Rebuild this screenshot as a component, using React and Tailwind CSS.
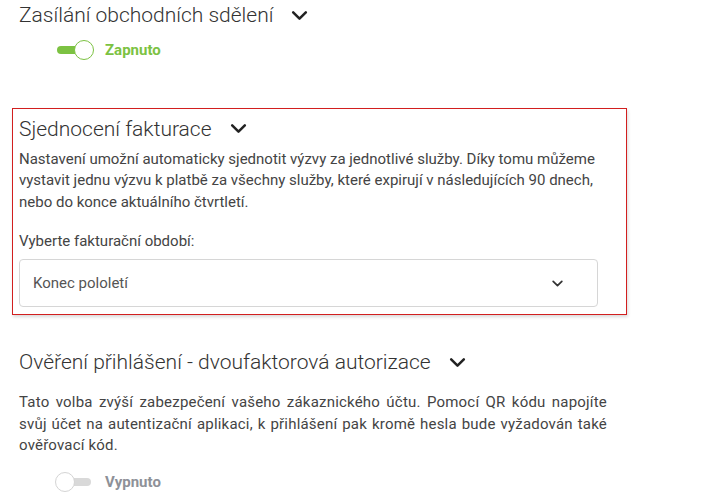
import React, { useState } from "react";

const Chevron = ({ className }) => (
    <svg viewBox="0 0 24 24" className={className} fill="none" stroke="currentColor" strokeWidth="3.2" strokeLinecap="round" strokeLinejoin="round">
        <path d="M4 8l8 8 8-8" />
    </svg>
);

const Toggle = ({ on, label, onClick }) => (
    <div className="flex items-center gap-3 pl-[36px] cursor-pointer" onClick={onClick}>
        <div className="relative w-[38px] h-[20px] flex items-center">
            <div className={`w-[34px] h-[8px] rounded-full ml-[2px] ${on ? "bg-[#7cc242]" : "bg-[#d9d9d9]"}`}></div>
            <div className={`absolute top-0 w-[20px] h-[20px] rounded-full bg-white border ${on ? "left-[19px] border-[#7cc242]" : "left-[0px] border-[#d4d4d4]"}`}></div>
        </div>
        <span className={`font-bold text-[15px] ${on ? "text-[#7cc242]" : "text-[#8e9198]"}`}>{label}</span>
    </div>
);

const Heading = ({ children }) => (
    <h2 className="flex items-center gap-[17px] text-[21px] font-light text-[#333] leading-[28px]">
        {children}
        <Chevron className="w-[19px] h-[19px] text-[#222]" />
    </h2>
);

const App = () => {
    const [marketing, setMarketing] = useState(true);
    const [twoFactor, setTwoFactor] = useState(false);
    const [period, setPeriod] = useState("Konec pololetí");

    return (
        <div className="w-[704px] h-[501px] bg-white overflow-hidden font-['Roboto',sans-serif] text-[#333]">
            <div className="pl-[19px] pt-[1px]">
                <Heading>Zasílání obchodních sdělení</Heading>
                <div className="mt-[10px]">
                    <Toggle on={marketing} label={marketing ? "Zapnuto" : "Vypnuto"} onClick={() => setMarketing(!marketing)} />
                </div>
            </div>

            <div className="mt-[46px] ml-[12px] w-[615px] border border-[#d21f1f] shadow-[1px_2px_3px_rgba(0,0,0,0.15)] px-[6px] pt-[6px] pb-[7px]">
                <Heading>Sjednocení fakturace</Heading>
                <p className="mt-[6px] text-[15px] leading-[21.5px] text-[#444] w-[590px]">
                    Nastavení umožní automaticky sjednotit výzvy za jednotlivé služby. Díky tomu můžeme vystavit jednu výzvu k platbě za všechny služby, které expirují v následujících 90 dnech, nebo do konce aktuálního čtvrtletí.
                </p>
                <p className="mt-[18px] text-[15px] leading-[21px] text-[#444]">Vyberte fakturační období:</p>
                <div className="relative mt-[7px] w-[579px]">
                    <select
                        value={period}
                        onChange={(e) => setPeriod(e.target.value)}
                        className="appearance-none w-full h-[48px] border border-[#d6d6d6] rounded-[4px] bg-white pl-[13px] text-[15px] text-[#555] outline-none"
                    >
                        <option>Konec pololetí</option>
                        <option>Konec čtvrtletí</option>
                        <option>Konec roku</option>
                    </select>
                    <Chevron className="absolute right-[34px] top-[18px] w-[13px] h-[13px] text-[#333] pointer-events-none" />
                </div>
            </div>

            <div className="pl-[19px] mt-[33px]">
                <Heading>Ověření přihlášení - dvoufaktorová autorizace</Heading>
                <p className="mt-[16px] w-[588px] text-[15px] tracking-[0.2px] leading-[21.5px] text-[#444] text-justify">
                    Tato volba zvýší zabezpečení vašeho zákaznického účtu. Pomocí QR kódu napojíte svůj účet na autentizační aplikaci, k přihlášení pak kromě hesla bude vyžadován také ověřovací kód.
                </p>
                <div className="mt-[14px]">
                    <Toggle on={twoFactor} label={twoFactor ? "Zapnuto" : "Vypnuto"} onClick={() => setTwoFactor(!twoFactor)} />
                </div>
            </div>
        </div>
    );
};

export default App;
